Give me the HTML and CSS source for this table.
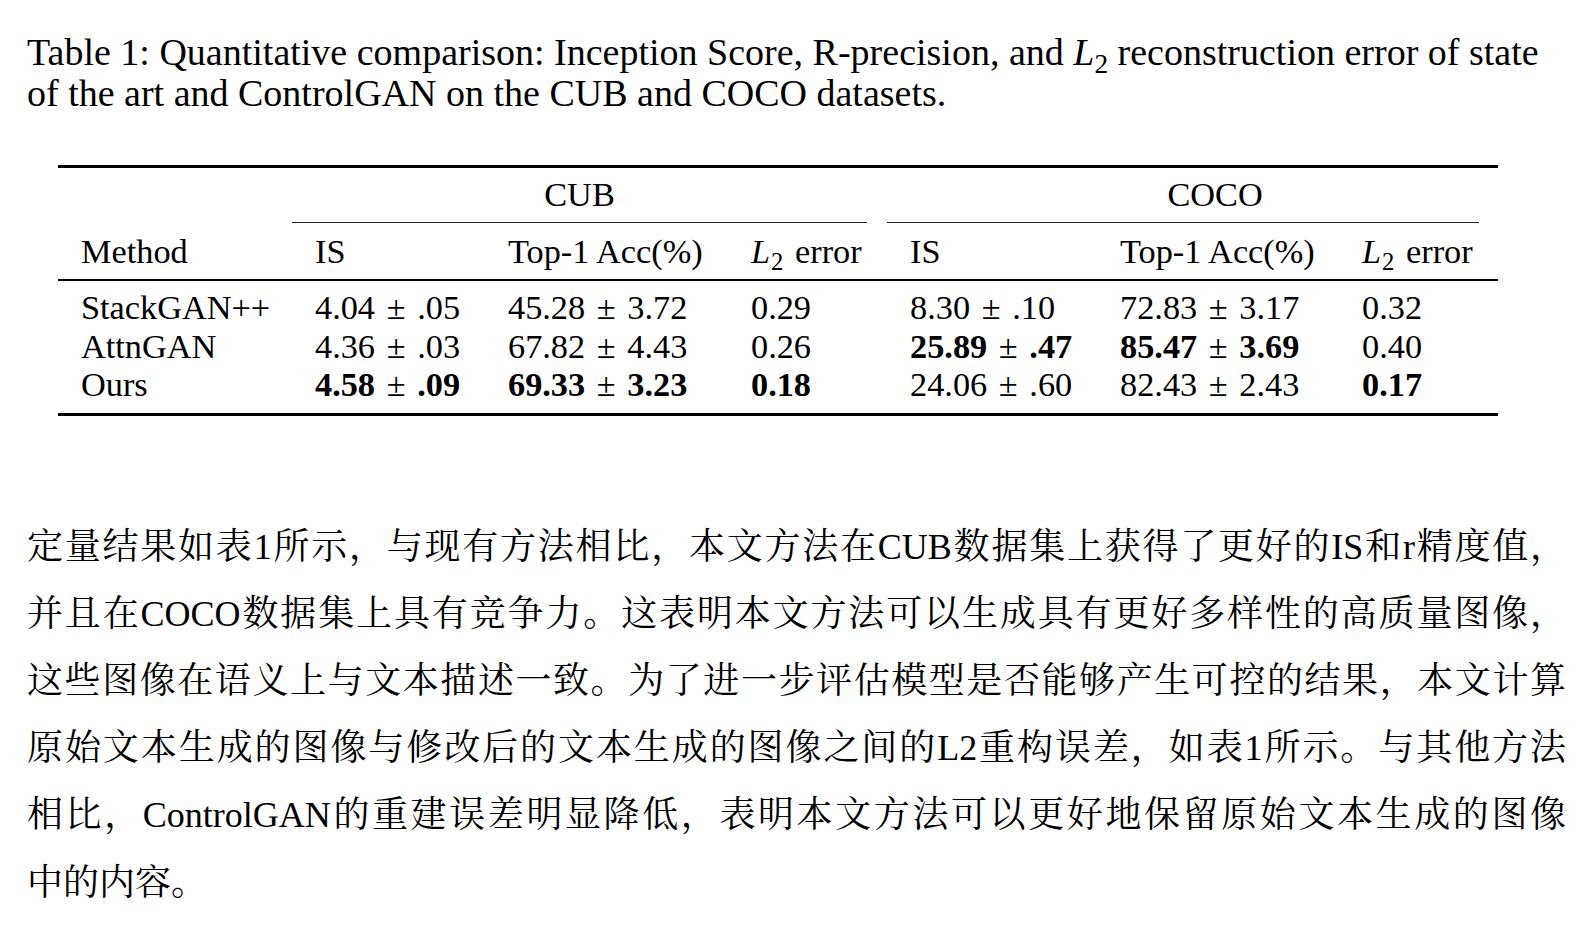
FILE: index.html
```html
<!DOCTYPE html>
<html lang="zh-CN">
<head>
<meta charset="utf-8">
<title>Table 1</title>
<link rel="stylesheet" href="styles.css">
</head>
<body>
<div class="page">
  <p class="caption">Table 1: Quantitative comparison: Inception Score, R-precision, and <i>L</i><sub>2</sub> reconstruction error of state<br>of the art and ControlGAN on the CUB and COCO datasets.</p>

  <table class="results">
    <colgroup>
      <col class="c1"><col class="c2"><col class="c3"><col class="c4"><col class="c5"><col class="c6"><col class="c7">
    </colgroup>
    <thead>
      <tr class="group-row">
        <th></th>
        <th colspan="3"><div class="grp grp-cub">CUB</div></th>
        <th colspan="3"><div class="grp grp-coco"><span class="grp-label">COCO</span></div></th>
      </tr>
      <tr class="head-row">
        <th>Method</th>
        <th>IS</th>
        <th>Top-1 Acc(%)</th>
        <th><i>L</i><sub>2</sub> error</th>
        <th>IS</th>
        <th>Top-1 Acc(%)</th>
        <th><i>L</i><sub>2</sub> error</th>
      </tr>
    </thead>
    <tbody>
      <tr>
        <td>StackGAN++</td>
        <td>4.04<span class="pm">±</span>.05</td>
        <td>45.28<span class="pm">±</span>3.72</td>
        <td>0.29</td>
        <td>8.30<span class="pm">±</span>.10</td>
        <td>72.83<span class="pm">±</span>3.17</td>
        <td>0.32</td>
      </tr>
      <tr>
        <td>AttnGAN</td>
        <td>4.36<span class="pm">±</span>.03</td>
        <td>67.82<span class="pm">±</span>4.43</td>
        <td>0.26</td>
        <td><b>25.89</b><span class="pm">±</span><b>.47</b></td>
        <td><b>85.47</b><span class="pm">±</span><b>3.69</b></td>
        <td>0.40</td>
      </tr>
      <tr>
        <td>Ours</td>
        <td><b>4.58</b><span class="pm">±</span><b>.09</b></td>
        <td><b>69.33</b><span class="pm">±</span><b>3.23</b></td>
        <td><b>0.18</b></td>
        <td>24.06<span class="pm">±</span>.60</td>
        <td>82.43<span class="pm">±</span>2.43</td>
        <td><b>0.17</b></td>
      </tr>
    </tbody>
  </table>

  <div class="body-text">
    <div class="ln">定量结果如表1所示，与现有方法相比，本文方法在CUB数据集上获得了更好的IS和r精度值，</div>
    <div class="ln">并且在COCO数据集上具有竞争力。这表明本文方法可以生成具有更好多样性的高质量图像，</div>
    <div class="ln">这些图像在语义上与文本描述一致。为了进一步评估模型是否能够产生可控的结果，本文计算</div>
    <div class="ln">原始文本生成的图像与修改后的文本生成的图像之间的L2重构误差，如表1所示。与其他方法</div>
    <div class="ln">相比，ControlGAN的重建误差明显降低，表明本文方法可以更好地保留原始文本生成的图像</div>
    <div class="ln ln-last">中的内容。</div>
  </div>
</div>
</body>
</html>
```

FILE: styles.css
```css
html, body {
  margin: 0;
  padding: 0;
  background: #ffffff;
}

body {
  color: #000000;
  font-family: "Liberation Serif", "Times New Roman", serif;
}

.page {
  padding: 32px 0 0 27px;
  width: 1545px;
}

.caption {
  margin: 0;
  font-size: 38px;
  line-height: 41px;
  white-space: nowrap;
}

.caption sub,
.results sub {
  font-size: 0.72em;
  vertical-align: -0.28em;
  line-height: 0;
}

.results i {
  padding-right: 1px;
}

.results sub {
  padding-right: 3px;
}

.results {
  margin: 51px 0 0 31px;
  width: 1440px;
  table-layout: fixed;
  border-collapse: collapse;
  font-size: 34.3px;
}

.c1 { width: 234px; }
.c2 { width: 193px; }
.c3 { width: 243px; }
.c4 { width: 159px; }
.c5 { width: 210px; }
.c6 { width: 242px; }
.c7 { width: 159px; }

.results th,
.results td {
  padding: 0 0 0 23px;
  text-align: left;
  font-weight: normal;
  white-space: nowrap;
}

.pm {
  font-weight: normal;
  padding: 0 0.34em;
}

.group-row {
  border-top: 3px solid #000;
}

.group-row th {
  padding: 0;
  height: 55px;
  vertical-align: top;
}

.grp {
  height: 54px;
  line-height: 53px;
  border-bottom: 1.4px solid #222;
  text-align: center;
}

.grp-cub {
  margin-right: 20px;
}

.grp-coco {
  margin-right: 19px;
}

.grp-label {
  display: inline-block;
  padding-left: 64px;
}

.head-row {
  border-bottom: 2px solid #000;
}

.head-row th {
  height: 56px;
  line-height: 56px;
  vertical-align: middle;
}

.results tbody td {
  height: 38.5px;
  line-height: 38.5px;
}

.results tbody tr:first-child td {
  padding-top: 7px;
}

.results tbody tr:last-child {
  border-bottom: 3px solid #000;
}

.results tbody tr:last-child td {
  padding-bottom: 9px;
}

.body-text {
  margin-top: 98px;
  width: 1539px;
  font-family: "Liberation Serif", "Noto Serif CJK SC", "Noto Sans CJK SC", serif;
  font-size: 36px;
  line-height: 67.2px;
}

.ln {
  text-align: justify;
  text-align-last: justify;
  text-justify: inter-character;
  white-space: nowrap;
}

.ln-last {
  text-align-last: left;
}
```
